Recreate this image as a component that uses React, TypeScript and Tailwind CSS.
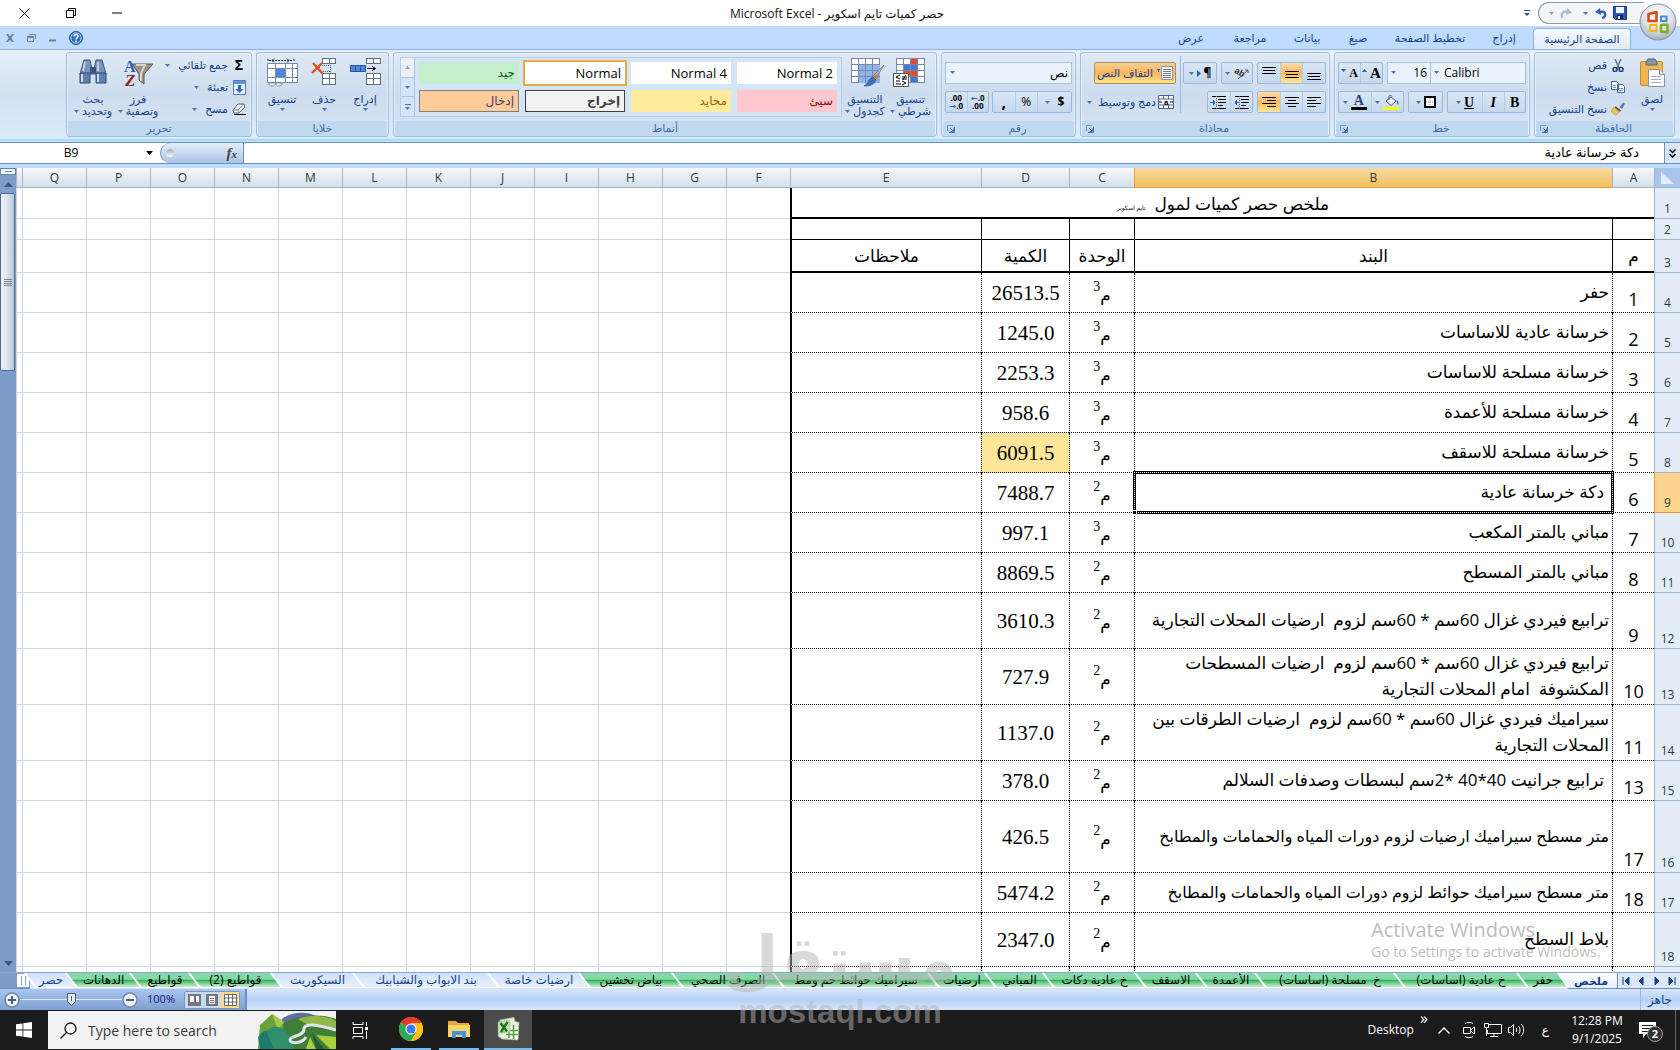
import React from 'react';

const UI = "font-['Open_Sans','DejaVu_Sans',sans-serif]";

/* ---------- small shared pieces ---------- */

function Arrow({ dim = false }: { dim?: boolean }) {
  return (
    <svg width="5" height="3" viewBox="0 0 5 3" className="shrink-0" aria-hidden="true">
      <path d="M0 0h5L2.5 3z" fill={dim ? '#9aa3ad' : '#4a76ad'} />
    </svg>
  );
}

function Launcher() {
  return (
    <button aria-label="خيارات" className="absolute left-1 top-1">
      <svg width="8" height="8" viewBox="0 0 8 8">
        <path d="M.5 6V.5H6" fill="none" stroke="#6f90b8" />
        <path d="M7.5 2v5.5H2M3 3l3 3M6.500 3.500V6.500H3.500" fill="none" stroke="#4d74a8" />
      </svg>
    </button>
  );
}

function Group({ title, className, launcher, children }: { title: string; className: string; launcher?: boolean; children: React.ReactNode }) {
  return (
    <section
      className={
        'flex h-[85px] shrink-0 flex-col overflow-hidden rounded-[3px] border border-[#a3bfdf] bg-gradient-to-b from-[#dfe9f5] via-[#cddcee] to-[#d7e5f5] shadow-[inset_0_0_0_1px_#e6effa] ' +
        className
      }
    >
      <div className="flex-1 px-[3px] pt-[3px]">{children}</div>
      <div className={'relative mx-px h-[15px] bg-[#c1d8f1] text-center text-[11px] leading-[14px] text-[#3e6aaa]' + (launcher ? ' pl-[18px]' : '')}>
        {title}
        {launcher && <Launcher />}
      </div>
    </section>
  );
}

function Big({ icon, lines, className, arrow = 'below' }: { icon: React.ReactNode; lines: string[]; className: string; arrow?: 'below' | 'inline' }) {
  return (
    <button className={'flex h-[64px] shrink-0 flex-col items-center text-[11px] leading-[12px] text-[#15428b] ' + className}>
      <span className="mb-[5px] mt-[2px] block h-[30px]">{icon}</span>
      {lines.map((l, i) => (
        <span key={l} className="flex items-center gap-[3px] whitespace-nowrap">
          {l}
          {arrow === 'inline' && i === lines.length - 1 && <Arrow />}
        </span>
      ))}
      {arrow === 'below' && (
        <span className="mt-[3px]">
          <Arrow />
        </span>
      )}
    </button>
  );
}

function Small({ icon, label, arrow }: { icon: React.ReactNode; label: string; arrow?: boolean }) {
  return (
    <button className="flex h-[22px] items-center gap-1 whitespace-nowrap text-[11px] leading-[18px] text-[#15428b]">
      <span className="flex w-[14px] justify-center">{icon}</span>
      {label}
      {arrow && (
        <span className="mr-1">
          <Arrow />
        </span>
      )}
    </button>
  );
}

function Bar({ className = '', children }: { className?: string; children: React.ReactNode }) {
  return (
    <div className={'flex h-[22px] items-stretch divide-x divide-[#b4cbe6] rounded-[2px] border border-[#9ab8dc] bg-gradient-to-b from-[#d9e6f4] to-[#c5d8ee] ' + className}>
      {children}
    </div>
  );
}

function Tool({ label, on, className = 'flex-1', children }: { label: string; on?: boolean; className?: string; children: React.ReactNode }) {
  return (
    <button
      aria-label={label}
      className={'flex items-center justify-center gap-[3px] ' + className + (on ? ' bg-gradient-to-b from-[#fbdcac] via-[#fdb863] to-[#fde696]' : '')}
    >
      {children}
    </button>
  );
}

function Lines({ rows }: { rows: [number, number, number][] }) {
  return (
    <svg width="14" height="13" viewBox="0 0 14 13" shapeRendering="crispEdges">
      {rows.map(([x, y, w], i) => (
        <rect key={i} x={x} y={y} width={w} height="1" fill="#000" />
      ))}
    </svg>
  );
}

/* ---------- title bar and ribbon tabs ---------- */

function OfficeOrb() {
  return (
    <button aria-label="زر Office" className="absolute right-[3px] top-[3px] z-10">
      <svg width="38" height="38" viewBox="0 0 38 38">
        <defs>
          <radialGradient id="orb" cx="50%" cy="30%" r="70%">
            <stop offset="0" stopColor="#fff" />
            <stop offset=".6" stopColor="#dde1e8" />
            <stop offset="1" stopColor="#a5adbb" />
          </radialGradient>
        </defs>
        <circle cx="19" cy="19" r="18" fill="url(#orb)" stroke="#8a919d" />
        <path d="M9.500 11l8-2v9h-8z" fill="none" stroke="#dd4b13" strokeWidth="2.600" strokeLinejoin="round" />
        <path d="M22 13.500h5.500v4.500H22z" fill="none" stroke="#3f8ad8" strokeWidth="2" strokeLinejoin="round" />
        <path d="M11 22h6.500v6H11z" fill="none" stroke="#f3b51c" strokeWidth="2" strokeLinejoin="round" />
        <path d="M22 22l6.500-.5v8L22 28.500z" fill="none" stroke="#7cb51f" strokeWidth="2.600" strokeLinejoin="round" />
      </svg>
    </button>
  );
}

function TitleBar() {
  return (
    <header dir="ltr" className="flex h-[26px] items-center bg-white">
      <div className="flex flex-1 items-center">
        <button aria-label="إغلاق" className="flex w-[48px] justify-center">
          <svg width="11" height="11" viewBox="0 0 11 11"><path d="M.5.5l10 10M10.500.5l-10 10" stroke="#000" fill="none" /></svg>
        </button>
        <button aria-label="استعادة" className="flex w-[46px] justify-center">
          <svg width="10" height="10" viewBox="0 0 10 10"><path d="M2.500 2.500V.5h7v7h-2M.5 2.500h7v7h-7z" stroke="#000" fill="none" /></svg>
        </button>
        <button aria-label="تصغير" className="flex w-[46px] justify-center">
          <svg width="10" height="2" viewBox="0 0 10 2"><path d="M0 1h10" stroke="#000" /></svg>
        </button>
      </div>
      <h1 dir="rtl" className="pl-[30px] pt-px text-[12px] text-[#111]">
        حصر كميات تايم اسكوير - <bdi>Microsoft Excel</bdi>
      </h1>
      <div className="flex flex-1 items-center justify-end gap-2 pr-[36px]">
        <button aria-label="تخصيص شريط الأدوات">
          <svg width="6" height="7" viewBox="0 0 6 7"><path d="M0 .5h6" stroke="#2c4f84" /><path d="M0 3h6L3 6z" fill="#2c4f84" /></svg>
        </button>
        <div className="flex h-[22px] w-[106px] items-center gap-[6px] rounded-l-full border border-r-0 border-[#8e99ab] bg-[#f3f5f8] pl-[10px]">
          <Arrow dim />
          <svg width="13" height="12" viewBox="0 0 13 12"><path d="M2.500 11C.5 7 3 3.500 7.500 5" fill="none" stroke="#a9bcd4" strokeWidth="2.500" /><path d="M7 1l5 4.500L6 8z" fill="#a9bcd4" /></svg>
          <span className="ml-1"><Arrow /></span>
          <svg width="13" height="12" viewBox="0 0 13 12"><path d="M8 11c5-1 4-8-2-6" fill="none" stroke="#2c5fb8" strokeWidth="2.500" /><path d="M6 1L1 5l6 3z" fill="#2c5fb8" /></svg>
          <svg width="14" height="14" viewBox="0 0 14 14"><path d="M.5.5h13v13h-11l-2-2z" fill="#2d57b5" stroke="#1b3880" /><path d="M3 1h8v6H3z" fill="#eef3fb" /><path d="M4 9h6v4H4z" fill="#16274f" /><path d="M5 10h2v3H5z" fill="#fff" /></svg>
        </div>
      </div>
    </header>
  );
}

const ribbonTabs: [string, string][] = [
  ['إدراج', 'w-[58px]'],
  ['تخطيط الصفحة', 'w-[90px]'],
  ['صيغ', 'w-[54px]'],
  ['بيانات', 'w-[48px]'],
  ['مراجعة', 'w-[66px]'],
  ['عرض', 'w-[52px]'],
];

function TabRow() {
  return (
    <nav className="flex h-[23px] items-end bg-[#bfdbff] pr-[49px] text-[11px] text-[#15428b]">
      <button className="h-[21px] w-[98px] whitespace-nowrap rounded-t-[4px] border border-b-0 border-[#8db2e3] bg-gradient-to-b from-[#f5f9fe] to-[#e0ebf9]">الصفحة الرئيسية</button>
      {ribbonTabs.map(([t, w]) => (
        <button key={t} className={'h-[21px] whitespace-nowrap ' + w}>{t}</button>
      ))}
      <div className="mr-auto flex h-full items-center gap-[13px] pl-[6px]">
        <button aria-label="تعليمات">
          <svg width="14" height="14" viewBox="0 0 14 14"><circle cx="7" cy="7" r="6.500" fill="#2f6fc8" stroke="#1d4f9c" /><circle cx="7" cy="7" r="5.200" fill="none" stroke="#b9d6f7" /><path d="M5 5.500c0-2.600 4-2.400 4 0C9 7 7 6.800 7 8.500M7 9.500V11" fill="none" stroke="#fff" strokeWidth="1.500" /></svg>
        </button>
        <button aria-label="تصغير المصنف">
          <svg width="7" height="9" viewBox="0 0 7 9"><path d="M0 7.500h7" stroke="#6b7c93" strokeWidth="2" /></svg>
        </button>
        <button aria-label="استعادة المصنف">
          <svg width="9" height="8" viewBox="0 0 9 8"><path d="M2 .5h6.500V5M.5 2.500h6v5h-6z" fill="none" stroke="#6b7c93" /><path d="M0 3h7" stroke="#6b7c93" strokeWidth="2" /></svg>
        </button>
        <button aria-label="إغلاق المصنف">
          <svg width="8" height="8" viewBox="0 0 8 8"><path d="M1 0l6 8M7 0L1 8" stroke="#6b7c93" strokeWidth="2" /></svg>
        </button>
      </div>
    </nav>
  );
}

/* ---------- ribbon icons ---------- */

const PasteIcon = () => (
  <svg width="27" height="30" viewBox="0 0 27 30">
    <rect x="1.500" y="3.500" width="22" height="24" rx="1.500" fill="#f0b653" stroke="#c98a2c" />
    <path d="M7 4l2-3h7l2 3v3H7z" fill="#8b94a1" stroke="#5c6470" />
    <path d="M9.500 11.500h11l5 5v12h-16z" fill="#fff" stroke="#8793a5" />
    <path d="M20.500 11.500v5h5" fill="#dbe4ef" stroke="#8793a5" />
    <path d="M12 18.500h10M12 21.500h10M12 24.500h10" stroke="#9fb4d1" />
  </svg>
);
const CutIcon = () => (
  <svg width="12" height="13" viewBox="0 0 12 13"><path d="M3 0l4 9M9 0L5 9" stroke="#6b7688" strokeWidth="1.500" /><circle cx="3" cy="10.500" r="2" fill="none" stroke="#1f3b75" strokeWidth="1.500" /><circle cx="9" cy="10.500" r="2" fill="none" stroke="#1f3b75" strokeWidth="1.500" /></svg>
);
const CopyIcon = () => (
  <svg width="14" height="12" viewBox="0 0 14 12"><path d="M.5.5h5l2 2v6h-7zM6.500 3.500h5l2 2v6h-7z" fill="#fff" stroke="#3d64a8" /><path d="M2 4.500h3M2 6.500h3M8 7.500h4M8 9.500h4" stroke="#6b93d0" /></svg>
);
const PainterIcon = () => (
  <svg width="15" height="14" viewBox="0 0 15 14"><path d="M9 5l4-5 2 1-3 6z" fill="#5e78a5" /><path d="M5 4l6 5-2 1-5-5z" fill="#4a4a4a" /><path d="M3 5l6 5-4 4-5-5z" fill="#f2c14e" stroke="#b98a2a" strokeWidth=".7" /></svg>
);
const BorderIcon = () => (
  <svg width="12" height="12" viewBox="0 0 12 12"><rect x="1" y="1" width="10" height="10" fill="#fff" stroke="#000" strokeWidth="2" /><path d="M6 2v8M2 6h8" stroke="#888" strokeDasharray="1 1" /></svg>
);
const FillIcon = () => (
  <svg width="17" height="15" viewBox="0 0 17 15"><path d="M3 6l5-4 5 4-5 4.500z" fill="#e9eef5" stroke="#4b5f80" /><path d="M6 5V1.500c0-1.500 3-1.500 3 0" fill="none" stroke="#4b5f80" /><path d="M13 5c3 1 3 4 2 5-1-1-1-3-2-5z" fill="#3773c9" /><rect y="12" width="16" height="3" fill="#ff0" /></svg>
);
const OrientIcon = () => (
  <svg width="16" height="14" viewBox="0 0 16 14" className="[direction:ltr]"><text x="1" y="9" fontSize="9" fontWeight="bold" fontFamily="Liberation Sans" fill="#333" transform="rotate(30 6 7)">ab</text><path d="M5 13L15 4M15 7V4h-3" stroke="#555" fill="none" /></svg>
);
const IndentIcon = ({ flip = false }: { flip?: boolean }) => (
  <svg width="17" height="13" viewBox="0 0 17 13" shapeRendering="crispEdges">
    <path d="M2 .5h4M7 .5h9M8 3.500h8M8 6.500h8M8 9.500h5M2 12.500h4M7 12.500h9" stroke="#000" />
    <path d="M6.500 0v13" stroke="#666" strokeDasharray="1 1" />
    <path d={flip ? 'M6 6.500H2M2 6.500l2-2M2 6.500l2 2' : 'M0 6.500h5M5 6.500l-2-2M5 6.500l-2 2'} stroke="#2d62b5" strokeWidth="1.500" />
  </svg>
);
const WrapIcon = () => (
  <svg width="16" height="14" viewBox="0 0 16 14" className="shrink-0"><path d="M4.500.5h11v13h-11z" fill="#fff" stroke="#7c91b3" /><path d="M6 3.500h8M6 5.500h8M6 7.500h8M6 9.500h8M6 11.500h8" stroke="#6d7b90" /><path d="M3 3.500H0M1.500 3v3" stroke="#2c5fb8" fill="none" /></svg>
);
const MergeIcon = () => (
  <svg width="16" height="14" viewBox="0 0 16 14" className="shrink-0 [direction:ltr]"><path d="M.5.5h15v13H.5zM.5 4h15M.5 10h15M5.500.5V4M10.500.5V4M5.500 10v3.500M10.500 10v3.500" fill="#fff" stroke="#55657d" /><text x="6" y="9.500" fontSize="8" fontWeight="bold" fontFamily="Liberation Sans">a</text><path d="M1 7h3M12 7h3" stroke="#2c5fb8" strokeWidth="1.500" /></svg>
);
const Grid30 = ({ children }: { children?: React.ReactNode }) => (
  <svg width="31" height="29" viewBox="0 0 31 29">
    <rect x="1.500" y=".5" width="28" height="24" fill="#fff" stroke="#7689a8" />
    {children}
    <path d="M8.500 1v24M15.500 1v24M22.500 1v24M1 6.500h29M1 12.500h29M1 18.500h29" stroke="#7689a8" />
  </svg>
);
const CondIcon = () => (
  <div className="relative">
    <Grid30><path d="M16 1h6v5h-6zM9 13h13v5H9z" fill="#ea4a28" /><path d="M9 7h13v6H9zM16 19h6v5h-6z" fill="#3f78d6" /></Grid30>
    <svg className="absolute -left-[2px] bottom-0" width="16" height="14" viewBox="0 0 16 14"><path d="M.5.5h15v13H.5z" fill="#fff" stroke="#555" /><path d="M7 2L3 4l4 2M3 8h4M9 4h5M9 6h5M13 2l-3 5M9 8l4 2-4 2M3 11h5" stroke="#000" fill="none" /></svg>
  </div>
);
const TableFmtIcon = () => (
  <div className="relative">
    <Grid30><path d="M9 7h21v18H9z" fill="#8fb4ea" /></Grid30>
    <svg className="absolute -right-1 bottom-0" width="22" height="22" viewBox="0 0 22 22"><path d="M21 0l-8 13-3-2z" fill="#b9bdc4" stroke="#72787f" strokeWidth=".8" /><path d="M14 9l2 2-3 4-3-3z" fill="#c97b3a" /><path d="M10 12l3 3c-2 5-6 6-12 6 4-2 4-7 9-9z" fill="#3e73b8" stroke="#23518f" strokeWidth=".6" /></svg>
  </div>
);
const InsertIcon = () => (
  <svg width="31" height="28" viewBox="0 0 31 28" shapeRendering="crispEdges"><path d="M16.500.5h14v5h-14zM23.500.5v5M16.500 15.500h14v11h-14zM23.500 15.500v11M16.500 20.500h14" fill="#fff" stroke="#5e6f88" /><path d="M.5 7.500h15v6H.5zM5.500 7.500v6M10.500 7.500v6" fill="#4d86dc" stroke="#2a58a0" /><path d="M17 10.500h8M22 8l3 2.500-3 2.500" fill="none" stroke="#222" /></svg>
);
const DeleteIcon = () => (
  <svg width="27" height="28" viewBox="0 0 27 28"><g shapeRendering="crispEdges"><path d="M11.500.5h13v5h-13zM18.500.5v5M11.500 15.500h13v11h-13zM18.500 15.500v11M11.500 20.500h13" fill="#fff" stroke="#5e6f88" /><path d="M8.500 7.500h11v6h-11z" fill="none" stroke="#2f66c0" strokeDasharray="1 1" /></g><path d="M2 5l10 11M11 5L1 15" stroke="#e8501e" strokeWidth="2.400" /></svg>
);
const FormatIcon = () => (
  <svg width="31" height="29" viewBox="0 0 31 29"><path d="M1 1v3M27 1v3M2 2.500h24M8 2.500h11" stroke="#333" strokeDasharray="2 1" /><path d="M7 .5l-2 2 2 2M20 .5l2 2-2 2" fill="none" stroke="#333" /><path d="M.5 5.500h30v19H.5z" fill="#fff" stroke="#7689a8" /><path d="M9 11h9v9H9z" fill="#4d86dc" /><path d="M8.500 5v20M18.500 5v20M25.500 5v20M.5 10.500h30M.5 19.500h30" stroke="#7689a8" /><path d="M2 25h6c2 4-7 4-6 0zM9 25h6c1 4-7 4-6 0z" fill="#fff" stroke="#7689a8" /></svg>
);
const SortIcon = () => (
  <svg width="31" height="30" viewBox="0 0 31 30" className="overflow-visible [direction:ltr]"><path d="M9 6h21L21 16v10l-5-4v-6z" fill="#9a9187" stroke="#5f5953" /><path d="M13 7h9l-4 8v8" fill="none" stroke="#d9d3cb" strokeWidth="2" /><text x="1" y="14" fontSize="16" fontWeight="bold" fontFamily="Liberation Serif" fill="#2f62b8">A</text><text x="2" y="28" fontSize="17" fontWeight="bold" fontFamily="Liberation Serif" fontStyle="italic" fill="#8c2717">Z</text></svg>
);
const FindIcon = () => (
  <svg width="28" height="27" viewBox="0 0 28 27"><path d="M5 2h6l3 14H1zM17 2h6l4 14H14z" fill="#7d95bb" stroke="#3b527d" /><path d="M1 15h10v10H1zM17 15h10v10H17z" fill="#5f7fb3" stroke="#2e4673" /><path d="M3 16v8M19 16v8" stroke="#cfdcf0" strokeWidth="2" /><path d="M6 4l-2 9M19 4v9" stroke="#d7e1f0" strokeWidth="1.500" /><path d="M11 9h6v6h-6z" fill="#3b527d" /></svg>
);
const DownIcon = () => (
  <svg width="13" height="15" viewBox="0 0 13 15"><path d="M.5.5h12v14H.5z" fill="#e8f0fb" stroke="#5a7fb8" /><path d="M1 1h11v3H1z" fill="#5f93dc" /><path d="M5 5h3v4h2.500l-4 4-4-4H5z" fill="#2d6bd0" /></svg>
);
const EraserIcon = () => (
  <svg width="14" height="12" viewBox="0 0 14 12"><path d="M6 1h6l1 3-6 6H2L1 7z" fill="#f6f6f8" stroke="#555c68" /><path d="M1 7h5l1 3M6 7l6-6" fill="none" stroke="#7b8290" /><path d="M2 11.500h12" stroke="#000" /></svg>
);

/* ---------- ribbon ---------- */

const combo = 'block h-[22px] appearance-none border border-[#abc1de] bg-[#eaf2fb] text-[12px] leading-[18px] text-black outline-none';

function Ribbon() {
  return (
    <div className="flex h-[91px] gap-1 border-y border-[#8db2e3] border-b-[#8fe0ee] bg-gradient-to-b from-[#e7effa] via-[#d3e1f3] to-[#dcebfa] pr-[5px] pt-[2px]">
      <Group title="الحافظة" className="w-[141px]" launcher>
        <div className="flex gap-2">
          <Big className="w-[38px]" icon={<PasteIcon />} lines={['لصق']} />
          <div className="-mt-[2px]">
            <Small icon={<CutIcon />} label="قص" />
            <Small icon={<CopyIcon />} label="نسخ" />
            <Small icon={<PainterIcon />} label="نسخ التنسيق" />
          </div>
        </div>
      </Group>

      <Group title="خط" className="w-[196px]" launcher>
        <div className="flex flex-col gap-[7px] pt-[6px]">
          <div className="flex gap-1">
            <div className="flex">
              <div dir="ltr" className="relative">
                <select aria-label="خط" className={combo + ' w-[96px] pl-[13px]'}><option>Calibri</option></select>
                <span className="pointer-events-none absolute left-1 top-[9px] flex"><Arrow /></span>
              </div>
              <div className="relative">
                <select aria-label="حجم الخط" className={combo + ' w-[43px] border-r-0 pr-[3px]'}><option>16</option></select>
                <span className="pointer-events-none absolute left-1 top-[9px] flex"><Arrow /></span>
              </div>
            </div>
            <Bar className="w-[45px] font-['Liberation_Serif',serif] font-bold">
              <Tool label="تكبير الخط"><span className="text-[15px]">A</span><svg width="5" height="9"><path d="M0 3h5L2.500 0z" fill="#2c5fb8" /></svg></Tool>
              <Tool label="تصغير الخط"><span className="text-[12px]">A</span><svg width="5" height="9"><path d="M0 0h5L2.500 3z" fill="#2c5fb8" /></svg></Tool>
            </Bar>
          </div>
          <div className="flex gap-1 font-['Liberation_Serif',serif] text-[14px] font-bold">
            <Bar className="w-[79px]">
              <Tool label="غامق">B</Tool>
              <Tool label="مائل"><i>I</i></Tool>
              <Tool label="تسطير" className="w-[34px]"><u>U</u><Arrow /></Tool>
            </Bar>
            <Bar className="w-[35px]"><Tool label="حدود"><BorderIcon /><Arrow /></Tool></Bar>
            <Bar className="w-[66px]">
              <Tool label="لون التعبئة"><FillIcon /><Arrow /></Tool>
              <Tool label="لون الخط"><span className="h-[16px] w-[16px] border-b-[3px] border-black text-center leading-[13px] text-[#26457c]">A</span><Arrow /></Tool>
            </Bar>
          </div>
        </div>
      </Group>

      <Group title="محاذاة" className="w-[250px]" launcher>
        <div className="flex">
          <div className="flex w-[146px] shrink-0 flex-col gap-[7px] border-l border-[#9ab8dc] pt-[6px]">
            <div className="flex gap-1">
              <Bar className="w-[69px]">
                <Tool label="محاذاة للأسفل"><Lines rows={[[0, 6, 14], [1, 9, 12], [0, 12, 14]]} /></Tool>
                <Tool label="محاذاة للوسط" on><Lines rows={[[0, 4, 14], [1, 7, 12], [0, 10, 14]]} /></Tool>
                <Tool label="محاذاة للأعلى"><Lines rows={[[0, 0, 14], [1, 3, 12], [0, 6, 14]]} /></Tool>
              </Bar>
              <Bar className="w-[32px]"><Tool label="الاتجاه"><OrientIcon /><Arrow /></Tool></Bar>
              <Bar className="w-[34px]"><Tool label="اتجاه النص"><span className="text-[12px] font-bold">¶</span><svg width="4" height="7"><path d="M0 0l4 3.500L0 7z" fill="#2c5fb8" /></svg><Arrow /></Tool></Bar>
            </div>
            <div className="flex gap-1">
              <Bar className="w-[69px]">
                <Tool label="محاذاة لليسار"><Lines rows={[[0, 1, 14], [0, 4, 9], [0, 7, 14], [0, 10, 9]]} /></Tool>
                <Tool label="توسيط"><Lines rows={[[0, 1, 14], [3, 4, 8], [0, 7, 14], [3, 10, 8]]} /></Tool>
                <Tool label="محاذاة لليمين" on><Lines rows={[[0, 1, 14], [5, 4, 9], [0, 7, 14], [5, 10, 9]]} /></Tool>
              </Bar>
              <Bar className="w-[46px]">
                <Tool label="إنقاص المسافة"><IndentIcon flip /></Tool>
                <Tool label="زيادة المسافة"><IndentIcon /></Tool>
              </Bar>
            </div>
          </div>
          <div className="flex flex-col gap-[7px] pr-1 pt-[6px] text-[11px] leading-[16px] text-[#15428b]">
            <button className="flex h-[22px] w-[82px] items-center gap-1 whitespace-nowrap rounded-[2px] border border-[#a8905c] bg-gradient-to-b from-[#f7cf94] via-[#fbb45c] to-[#fde58e] px-[2px]"><WrapIcon />التفاف النص</button>
            <button className="flex h-[22px] items-center gap-[2px] whitespace-nowrap px-[2px]"><MergeIcon />دمج وتوسيط<span className="mr-1"><Arrow /></span></button>
          </div>
        </div>
      </Group>

      <Group title="رقم" className="w-[135px]" launcher>
        <div className="flex flex-col gap-[7px] pt-[6px]">
          <div className="relative">
            <select aria-label="تنسيق الأرقام" className={combo + ' w-full pr-[3px]'}><option>نص</option></select>
            <span className="pointer-events-none absolute left-[5px] top-[9px] flex"><Arrow /></span>
          </div>
          <div className="flex justify-between text-[12px]">
            <Bar className="w-[80px]">
              <Tool label="عملة" className="w-[34px] gap-[8px]"><b>$</b><Arrow /></Tool>
              <Tool label="نسبة مئوية">%</Tool>
              <Tool label="فاصلة"><b className="text-[16px] leading-[10px]">,</b></Tool>
            </Bar>
            <Bar className="w-[44px] text-[8px] font-bold leading-[8px]">
              <Tool label="زيادة المنازل العشرية"><span dir="ltr"><span className="text-[#2c5fb8]">←</span>.0<br />.00</span></Tool>
              <Tool label="إنقاص المنازل العشرية"><span dir="ltr">.00<br /><span className="text-[#2c5fb8]">→</span>.0</span></Tool>
            </Bar>
          </div>
        </div>
      </Group>

      <Group title="أنماط" className="w-[544px]">
        <div className="flex">
          <Big className="w-[45px]" icon={<CondIcon />} lines={['تنسيق', 'شرطي']} arrow="inline" />
          <Big className="w-[46px]" icon={<TableFmtIcon />} lines={['التنسيق', 'كجدول']} arrow="inline" />
          <div className="ml-[3px] mt-px flex h-[60px] flex-1 border border-[#b6cdea] bg-[#d5e5f8]">
            <div className="grid flex-1 grid-cols-4 content-start gap-x-[6px] gap-y-[6px] px-[4px] pt-[4px] text-[13px] [&>button]:h-[22px] [&>button]:px-[4px] [&>button]:text-right [&>button]:leading-[18px]">
              <button className="bg-white"><bdi>Normal 2</bdi></button>
              <button className="bg-white"><bdi>Normal 4</bdi></button>
              <button className="bg-white outline-2 outline-[#e9ab3d]">Normal</button>
              <button className="bg-[#c6efce] text-[12px] text-[#006100]">جيد</button>
              <button className="bg-[#ffc7ce] text-[12px] text-[#9c0006]">سيئ</button>
              <button className="bg-[#ffeb9c] text-[12px] text-[#9c6500]">محايد</button>
              <button className="border border-[#3f3f3f] bg-[#f2f2f2] text-[12px] font-bold text-[#3f3f3f]">إخراج</button>
              <button className="border border-[#7f7f7f] bg-[#ffcc99] text-[12px] text-[#3f3f76]">إدخال</button>
            </div>
            <div className="flex w-[14px] flex-col divide-y divide-[#aac4e4] border-r border-[#aac4e4]">
              <button aria-label="السابق" className="flex flex-1 items-center justify-center bg-[#eceff3]"><span className="rotate-180"><Arrow dim /></span></button>
              <button aria-label="التالي" className="flex flex-1 items-center justify-center"><Arrow /></button>
              <button aria-label="المزيد" className="flex flex-1 flex-col items-center justify-center gap-[2px]"><span className="h-px w-[6px] bg-[#4a76ad]" /><Arrow /></button>
            </div>
          </div>
        </div>
      </Group>

      <Group title="خلايا" className="w-[133px]">
        <div className="flex">
          <Big className="w-[40px]" icon={<InsertIcon />} lines={['إدراج']} />
          <Big className="w-[42px]" icon={<DeleteIcon />} lines={['حذف']} />
          <Big className="w-[42px]" icon={<FormatIcon />} lines={['تنسيق']} />
        </div>
      </Group>

      <Group title="تحرير" className="w-[186px]">
        <div className="flex">
          <div className="-mt-[2px] w-[88px] shrink-0 pr-[2px]">
            <Small icon={<span className="text-[14px] font-bold text-black">Σ</span>} label="جمع تلقائي" arrow />
            <Small icon={<DownIcon />} label="تعبئة" arrow />
            <Small icon={<EraserIcon />} label="مسح" arrow />
          </div>
          <Big className="w-[44px]" icon={<SortIcon />} lines={['فرز', 'وتصفية']} arrow="inline" />
          <Big className="w-[46px]" icon={<FindIcon />} lines={['بحث', 'وتحديد']} arrow="inline" />
        </div>
      </Group>
    </div>
  );
}

/* ---------- formula bar ---------- */

function FormulaBar() {
  return (
    <div dir="ltr" className="mt-[2px] flex h-[22px] border-y border-[#6a8fbf] bg-white">
      <div className="flex w-[160px] items-center pr-[7px]">
        <input aria-label="مربع الاسم" defaultValue="B9" className="w-full min-w-0 flex-1 pr-[4px] text-center text-[12px] outline-none" />
        <svg width="7" height="4"><path d="M0 0h7L3.500 4z" fill="#000" /></svg>
      </div>
      <div className="flex w-[84px] items-center justify-between rounded-l-full border border-y-0 border-[#6a8fbf] bg-gradient-to-b from-[#e3edf9] via-[#c8daf2] to-[#a9c3e5] pl-[5px] pr-[6px]">
        <span className="h-[8px] w-[8px] rounded-full bg-gradient-to-b from-[#a4abb5] to-white" />
        <button aria-label="إدراج دالة" className="font-['Liberation_Serif',serif] text-[15px] font-bold italic leading-none text-[#444]">f<span className="text-[11px]">x</span></button>
      </div>
      <input dir="rtl" aria-label="شريط الصيغة" defaultValue="دكة خرسانة عادية" className="min-w-0 flex-1 pr-[25px] text-[13px] outline-none" />
      <button aria-label="توسيع شريط الصيغة" className="flex w-[16px] items-center justify-center border-l border-[#6a8fbf] bg-[#dbe7f6]">
        <svg width="7" height="9" viewBox="0 0 7 9"><path d="M.5.5l3 3 3-3M.5 5l3 3 3-3" fill="none" stroke="#000" strokeWidth="1.500" /></svg>
      </button>
    </div>
  );
}

/* ---------- worksheet ---------- */

type Row = { r: number; n: string; item: string; unit: string; qty: string; h: string; pad?: boolean; long?: boolean };
const rows: Row[] = [
  { r: 4, n: '1', item: 'حفر', unit: '3', qty: '26513.5', h: 'h-[40px]' },
  { r: 5, n: '2', item: 'خرسانة عادية للاساسات', unit: '3', qty: '1245.0', h: 'h-[40px]' },
  { r: 6, n: '3', item: 'خرسانة مسلحة للاساسات', unit: '3', qty: '2253.3', h: 'h-[40px]' },
  { r: 7, n: '4', item: 'خرسانة مسلحة للأعمدة', unit: '3', qty: '958.6', h: 'h-[40px]' },
  { r: 8, n: '5', item: 'خرسانة مسلحة للاسقف', unit: '3', qty: '6091.5', h: 'h-[40px]' },
  { r: 9, n: '6', item: 'دكة خرسانة عادية', unit: '2', qty: '7488.7', h: 'h-[40px]', pad: true },
  { r: 10, n: '7', item: 'مباني بالمتر المكعب', unit: '3', qty: '997.1', h: 'h-[40px]' },
  { r: 11, n: '8', item: 'مباني بالمتر المسطح', unit: '2', qty: '8869.5', h: 'h-[40px]' },
  { r: 12, n: '9', item: 'ترابيع فيردي غزال 60سم * 60سم لزوم  ارضيات المحلات التجارية', unit: '2', qty: '3610.3', h: 'h-[56px]' },
  { r: 13, n: '10', item: 'ترابيع فيردي غزال 60سم * 60سم لزوم  ارضيات المسطحات\nالمكشوفة  امام المحلات التجارية', unit: '2', qty: '727.9', h: 'h-[56px]' },
  { r: 14, n: '11', item: 'سيراميك فيردي غزال 60سم * 60سم لزوم  ارضيات الطرقات بين\nالمحلات التجارية', unit: '2', qty: '1137.0', h: 'h-[56px]' },
  { r: 15, n: '13', item: 'ترابيع جرانيت 40*40 *2سم لبسطات وصدفات السلالم', unit: '2', qty: '378.0', h: 'h-[40px]', pad: true },
  { r: 16, n: '17', item: 'متر مسطح سيراميك ارضيات لزوم دورات المياه والحمامات والمطابخ', unit: '2', qty: '426.5', h: 'h-[72px]', long: true },
  { r: 17, n: '18', item: 'متر مسطح سيراميك حوائط لزوم دورات المياه والحمامات والمطابخ', unit: '2', qty: '5474.2', h: 'h-[40px]', long: true },
  { r: 18, n: '', item: 'بلاط السطح', unit: '2', qty: '2347.0', h: 'h-[54px]' },
  { r: 19, n: '', item: '', unit: '', qty: '', h: 'h-[40px]' },
];
const freeCols = ['F', 'G', 'H', 'I', 'J', 'K', 'L', 'M', 'N', 'O', 'P', 'Q', ''];

const colHead = 'border-b border-l border-[#9eb6ce] bg-gradient-to-b from-[#f7f9fb] to-[#d5dee9] p-0 font-normal';
const rowHead = 'border-b border-l border-[#9eb6ce] bg-[#e4ecf7] p-0 align-bottom font-normal';
const dot = 'border-b border-l border-dotted border-black p-0 ';
const solid = 'border-l border-black p-0 font-normal ';

function FreeCells() {
  return (
    <>
      {freeCols.map((c, i) => (
        <td key={i} className="border-b border-l border-[#d0d7e5] p-0" />
      ))}
    </>
  );
}

function Sheet() {
  return (
    <div className="min-w-0 flex-1 overflow-hidden bg-white">
      <table dir="rtl" className="w-full table-fixed border-separate border-spacing-0 text-black">
        <colgroup>
          <col className="w-[26px]" />
          <col className="w-[42px]" />
          <col className="w-[478px]" />
          <col className="w-[65px]" />
          <col className="w-[88px]" />
          <col className="w-[191px]" />
          {freeCols.map((c, i) => (
            <col key={i} className={c ? 'w-[64px]' : ''} />
          ))}
        </colgroup>
        <thead>
          <tr className="h-[20px] text-[12px] leading-[19px] text-[#27413e]">
            <th className="border-b border-l border-[#9eb6ce] bg-[#a9c4e9] p-0">
              <svg className="mr-[6px] block" width="13" height="12"><path d="M0 0l13 12H0z" fill="#e4ecf7" /></svg>
            </th>
            <th className={colHead}>A</th>
            <th className="border-b border-l border-[#f29536] bg-gradient-to-b from-[#f9d99f] to-[#f1c15f] p-0 font-normal">B</th>
            {['C', 'D', 'E', ...freeCols].map((c, i) => (
              <th key={i} className={colHead}>{c}</th>
            ))}
          </tr>
        </thead>
        <tbody className="text-[12px] text-[#27413e]">
          <tr className="h-[31px]">
            <th className={rowHead}>1</th>
            <td colSpan={5} className="whitespace-pre border-b-2 border-l-2 border-black p-0 pt-[3px] text-center text-[17px] leading-[20px] text-black">
              ملخص حصر كميات لمول  <span className="text-[6px] leading-none">تايم اسكوير</span>
            </td>
            <FreeCells />
          </tr>
          <tr className="h-[21px]">
            <th className={rowHead}>2</th>
            {[0, 1, 2, 3].map((i) => (
              <td key={i} className={solid + 'border-b'} />
            ))}
            <td className="border-b border-l-2 border-black p-0" />
            <FreeCells />
          </tr>
          <tr className="h-[33px] text-[12px]">
            <th className={rowHead}>3</th>
            {['م', 'البند', 'الوحدة', 'الكمية'].map((t) => (
              <th key={t} scope="col" className={solid + 'border-b-2 text-[17px] leading-[24px] text-black'}>{t}</th>
            ))}
            <th scope="col" className="border-b-2 border-l-2 border-black p-0 text-[17px] font-normal leading-[24px] text-black">ملاحظات</th>
            <FreeCells />
          </tr>
          {rows.map((row) => (
            <tr key={row.r} className={row.h}>
              <th className={row.r === 9 ? 'border-b border-l border-[#f29536] bg-[#ffd58d] p-0 align-bottom font-normal' : rowHead}>{row.r === 19 ? '' : row.r}</th>
              <td className={dot + 'text-center align-bottom text-[18px] leading-[25px] text-black'}>{row.n}</td>
              <td className={dot + 'relative whitespace-pre pb-[2px] leading-[26px] text-black ' + (row.long ? 'text-[16px] ' : 'text-[17px] ') + (row.pad ? 'pr-[8px]' : 'pr-[3px]')}>
                {row.item}
                {row.r === 9 && (
                  <span className="pointer-events-none absolute -inset-[2px] z-10 border-[3px] border-black">
                    <span className="absolute -inset-[2px] border border-dotted border-white" />
                    <span className="absolute -bottom-[4px] -left-[4px] h-[5px] w-[5px] border border-white bg-black" />
                  </span>
                )}
              </td>
              <td className={dot + 'text-center text-[17px] leading-[24px] text-black'}>
                {row.unit && (
                  <span className="inline-flex h-[28px] items-end align-middle">
                    م<sup className="static self-start font-['Liberation_Serif',serif] text-[14px] leading-[16px]">{row.unit}</sup>
                  </span>
                )}
              </td>
              <td className={dot + "text-center font-['Liberation_Serif',serif] text-[21px] leading-[26px] text-black " + (row.r === 8 ? 'bg-[#ffe699]' : '')}>{row.qty}</td>
              <td className="border-b border-l-2 border-black p-0 [border-bottom-style:dotted]" />
              <FreeCells />
            </tr>
          ))}
        </tbody>
      </table>
    </div>
  );
}

function VerticalScroll() {
  return (
    <div dir="ltr" className="flex w-[16px] shrink-0 flex-col bg-[#7c9dca]">
      <div className="flex h-[7px] items-center justify-center border border-[#5c86bd] bg-white"><span className="h-px w-[7px] bg-[#5c86bd]" /></div>
      <button aria-label="لأعلى" className="flex h-[18px] items-center justify-center"><svg width="9" height="5"><path d="M0 5h9L4.500 0z" fill="#3e5680" /></svg></button>
      <div className="flex h-[178px] w-[15px] flex-col items-center justify-center gap-[1px] rounded-[1px] border border-[#4e6a9b] bg-gradient-to-r from-[#eef2f6] via-[#dde4ec] to-[#b3c6d8]">
        {[0, 1, 2, 3].map((i) => (
          <span key={i} className="h-px w-[8px] bg-[#7d8088]" />
        ))}
      </div>
      <button aria-label="لأسفل" className="mt-auto flex h-[18px] items-center justify-center"><svg width="9" height="5"><path d="M0 0h9L4.500 5z" fill="#3e5680" /></svg></button>
    </div>
  );
}

/* ---------- sheet tabs and status ---------- */

const slant = '[clip-path:polygon(0_0,calc(100%-11px)_0,100%_100%,11px_100%)]';
const sheetTabs: [string, string, boolean][] = [
  ['حفر', 'w-[52px]', true],
  ['خ عادية (اساسات)', 'w-[134px]', true],
  ['خ  مسلحة (اساسات)', 'w-[150px]', true],
  ['الأعمدة', 'w-[70px]', true],
  ['الاسقف', 'w-[72px]', true],
  ['خ عادية دكات', 'w-[103px]', true],
  ['المباني', 'w-[69px]', true],
  ['ارضيات', 'w-[68px]', true],
  ['سيراميك حوائط حم ومط', 'w-[166px]', true],
  ['الصرف الصحي', 'w-[112px]', true],
  ['بياض تخشين', 'w-[104px]', true],
  ['ارضيات خاصة', 'w-[102px]', false],
  ['بند الابواب والشبابيك', 'w-[146px]', false],
  ['السيكوريت', 'w-[93px]', false],
  ['قواطيع (2)', 'w-[93px]', true],
  ['قواطيع', 'w-[70px]', true],
  ['الدهانات', 'w-[75px]', true],
  ['حصر', 'w-[52px]', false],
];

function SheetTabs() {
  return (
    <div className="flex h-[17px] shrink-0 border-t border-[#8aa7d3] bg-[#d6e5fa] text-[12px] leading-[15px]">
      <div dir="ltr" className="flex w-[63px] shrink-0 items-center justify-around border-b border-l border-[#6a8fbf] bg-[#dde9f8]">
        {['M1 0v8M7 0L3 4l4 4z', 'M6 0L2 4l4 4z', 'M2 0l4 4-4 4z', 'M7 0v8M1 0l4 4-4 4z'].map((d) => (
          <button key={d} aria-label="تنقل بين الأوراق"><svg width="8" height="8"><path d={d} fill="#15428b" stroke="#15428b" /></svg></button>
        ))}
      </div>
      <button className="z-10 -ml-[11px] w-[60px] shrink-0 border-b border-[#6a8fbf] bg-gradient-to-b from-white to-[#e6f0fc] pl-2 text-[11px] font-bold text-[#15428b] [clip-path:polygon(0_0,100%_0,100%_100%,11px_100%)]">ملخص</button>
      {sheetTabs.map(([t, w, green]) => (
        <button key={t} className={'-ml-[11px] h-[15px] shrink-0 bg-white pb-px pl-[2px] ' + slant + ' ' + w}>
          <span
            className={
              'block h-[14px] whitespace-pre leading-[14px] ' +
              slant +
              (green ? ' bg-gradient-to-b from-[#86d9a6] from-45% via-[#16b255] via-50% to-[#c8efd6] text-black' : ' bg-gradient-to-b from-[#cfe0f8] to-[#e6f0fc] text-[#15428b]')
            }
          >
            {t}
          </span>
        </button>
      ))}
      <div className="mr-auto flex w-[30px] shrink-0 border-b border-[#6a8fbf] bg-[#7c9dca]">
        <span className="flex h-full w-[14px] justify-center gap-[3px] border border-[#7fa0cf] bg-white py-[2px]"><i className="w-px bg-[#7fa0cf]" /><i className="w-px bg-[#7fa0cf]" /></span>
      </div>
    </div>
  );
}

function RoundBtn({ plus }: { plus?: boolean }) {
  return (
    <button aria-label={plus ? 'تكبير' : 'تصغير العرض'} className="shrink-0">
      <svg width="16" height="16" viewBox="0 0 16 16"><circle cx="8" cy="8" r="7" fill="#f1f5fb" stroke="#6f87ab" strokeWidth="1.500" /><path d={plus ? 'M4 8h8M8 4v8' : 'M4 8h8'} stroke="#465f88" strokeWidth="2" /></svg>
    </button>
  );
}

function StatusBar() {
  return (
    <footer className="flex h-[21px] shrink-0 bg-gradient-to-b from-[#d9e7fa] via-[#b4d0f5] via-50% to-[#d8e7fb] text-[11px] text-[#15428b]">
      <span className="flex w-[40px] items-center border-l border-[#9cb9e0] pr-2 text-[12px] leading-[16px]">جاهز</span>
      <div dir="ltr" className="mr-auto flex w-[247px] items-center border-r-2 border-[#6a8fbf] bg-gradient-to-b from-[#a9c6ee] to-[#7e9fd2] pl-1">
        <RoundBtn plus />
        <div className="relative flex h-full w-[102px] items-center">
          <input aria-label="مستوى التكبير" type="range" className="absolute inset-0 w-full opacity-0" />
          <span className="h-px w-full bg-[#e3ecf8]" />
          <svg className="absolute left-[46px]" width="11" height="13" viewBox="0 0 11 13"><path d="M1.500.5h8v8l-4 4-4-4z" fill="#e4ecf7" stroke="#465f88" /><path d="M5.500 3v5" stroke="#465f88" /></svg>
        </div>
        <RoundBtn />
        <span className="w-[46px] text-center text-[#15157a]">100%</span>
        <div className="flex h-[18px] w-[56px] rounded-[2px] border border-[#7c97c0] bg-[#c7daf3]">
          <button aria-label="معاينة فواصل الصفحات" className="flex flex-1 items-center justify-center"><svg width="13" height="12"><path d="M0 0h13v12H0z" fill="#777" /><path d="M2 2h4v6H2zM8 2h3v6H8z" fill="#fff" /></svg></button>
          <button aria-label="تخطيط الصفحة" className="flex flex-1 items-center justify-center"><svg width="12" height="12"><path d="M0 0h12v12H0z" fill="#777" /><path d="M3 2h6v8H3z" fill="#fff" /><path d="M4 4.500h4M4 6.500h4M4 8.500h4" stroke="#777" /></svg></button>
          <button aria-label="عادي" className="flex flex-1 items-center justify-center bg-[#fdd78a]"><svg width="13" height="12"><path d="M.5.5h12v11H.5zM.5 4h12M.5 8h12M4.500.5v11M8.500.5v11" fill="#fff" stroke="#666" /></svg></button>
        </div>
      </div>
    </footer>
  );
}

/* ---------- desktop taskbar ---------- */

function Landscape() {
  return (
    <svg className="absolute right-0 top-0" width="78" height="38" viewBox="0 0 78 38">
      <path d="M24 8C34 0 50 0 60 6l18 6v10H20z" fill="#5e6fa8" />
      <path d="M2 14L14 3l12 8 8 27H0z" fill="#6ba03a" />
      <path d="M14 3l12 8-6 8z" fill="#a9c653" />
      <path d="M26 12C40 4 62 2 78 8v30H20z" fill="#3f7f35" />
      <path d="M40 8c12-5 30-3 38 2v8L50 14z" fill="#93b84a" />
      <path d="M0 26c6-8 14-10 22-2l8 14H2z" fill="#1d7a6c" />
      <path d="M8 20c10-8 18-4 24 6l4 12H16z" fill="#2f8f6a" />
      <path d="M78 19C58 13 46 12 46 18c0 8-14 6-14 11 0 4 12 4 16-3" fill="none" stroke="#dfe3ee" strokeWidth="3" />
      <path d="M48 38l4-12 6 12zM58 24l14 14h6V26z" fill="#a8cf3c" />
      <path d="M54 22l12 16h-8z" fill="#1d5f37" />
    </svg>
  );
}

function Taskbar() {
  return (
    <div dir="ltr" className="flex h-[40px] shrink-0 items-stretch bg-[#1b1b1b] text-white">
      <button aria-label="Start" className="flex w-[48px] items-center justify-center">
        <svg width="16" height="16" viewBox="0 0 16 16"><path d="M0 2.300L6.500 1.400v6.200H0zM7.300 1.300L16 0v7.600H7.300zM0 8.400h6.500v6.200L0 13.700zM7.300 8.400H16V16l-8.700-1.300z" fill="#fff" /></svg>
      </button>
      <label className="relative my-px flex w-[288px] items-center overflow-hidden bg-[#f2f2f2] pl-[12px]">
        <svg width="17" height="17" viewBox="0 0 17 17"><circle cx="10.500" cy="6.500" r="5.500" fill="none" stroke="#111" strokeWidth="1.300" /><path d="M6.500 10.500L.5 16.500" stroke="#111" strokeWidth="1.300" /></svg>
        <input aria-label="Type here to search" placeholder="Type here to search" className="ml-[11px] w-[160px] text-[14px] text-[#333] outline-none placeholder:text-[#3b3b3b]" />
        <Landscape />
      </label>
      <button aria-label="Task View" className="flex w-[48px] items-center justify-center">
        <svg width="17" height="17" viewBox="0 0 17 17"><path d="M1 0v2.500h10V0M1.500 5.500h9v6h-9zM1 17v-2.500h10V17M14.500 0v4M14.500 9v8" fill="none" stroke="#fff" /><path d="M13 5h3v3h-3z" fill="#fff" /></svg>
      </button>
      <div className="ml-[3px] flex gap-2 pl-1">
        <button aria-label="Google Chrome" className="flex w-[40px] items-center justify-center border-b-2 border-[#76b9ed]">
          <svg width="24" height="24" viewBox="0 0 24 24"><circle cx="12" cy="12" r="12" fill="#fbc116" /><path d="M12 12L1.600 6A12 12 0 0 1 22.400 6z" fill="#e33b2e" /><path d="M12 12L1.600 6A12 12 0 0 0 12 24l5-9z" fill="#2da94f" /><path d="M12 6h10.400a12 12 0 0 1-10.400 18l5.200-9z" fill="#fbc116" /><circle cx="12" cy="12" r="5.600" fill="#fff" /><circle cx="12" cy="12" r="4.500" fill="#3a7cf0" /></svg>
        </button>
        <button aria-label="File Explorer" className="flex w-[40px] items-center justify-center border-b-2 border-[#76b9ed]">
          <svg width="22" height="18" viewBox="0 0 22 18"><path d="M0 1h8l2 2h11v14H0z" fill="#e9a73a" /><path d="M0 5h22v12H0z" fill="#fbd568" /><path d="M4 18v-7h14v7h-4v-3H8v3z" fill="#3f94dd" /></svg>
        </button>
        <button aria-label="Microsoft Excel" className="-ml-[3px] flex w-[48px] items-center justify-center border-b-2 border-[#76b9ed] bg-[#4b4b4b]">
          <svg width="24" height="24" viewBox="0 0 24 24"><path d="M4 3l14-2.500 1 4 4 1-1 17.500-16-1-4-3z" fill="#e6f1df" stroke="#a9bd9f" strokeWidth=".8" /><path d="M10 10h12v12l-12-1z" fill="#fff" /><path d="M10 13.500h12M10 17.500h12M13 8v13M17.500 8v14" stroke="#5c9a46" strokeWidth="1.600" /><path d="M2 5l12-2v12L2 16z" fill="#c5e2b3" stroke="#8db27a" strokeWidth=".6" /><path d="M4.500 6l6.500 8.500M11.500 5L5 15" stroke="#1f6f1d" strokeWidth="2.400" /></svg>
        </button>
      </div>
      <div className="ml-auto flex items-center text-[12px]">
        <span>Desktop</span>
        <span className="ml-[6px] self-start text-[16px] leading-[16px]">»</span>
        <svg className="ml-[10px]" width="12" height="7"><path d="M.5 6.500l5.500-5.500 5.500 5.500" fill="none" stroke="#fff" strokeWidth="1.300" /></svg>
        <svg className="ml-[13px]" width="12" height="16" viewBox="0 0 12 16"><path d="M2 1.500C4 0 8 0 10 1.500M2 14.500c2 1.500 6 1.500 8 0M.5 5.500h7v6h-7zM7.500 8l4-3v7l-4-3" fill="none" stroke="#fff" /></svg>
        <svg className="ml-[9px]" width="18" height="15" viewBox="0 0 18 15"><path d="M5 1.500h12.500v9H3.500V7M.5.5h4v4h-4zM2.500 4v9M10 10.500v3M6 13.500h8" fill="none" stroke="#fff" /></svg>
        <svg className="ml-[6px]" width="17" height="14" viewBox="0 0 17 14"><path d="M.5 4.500h2l3-3v11l-3-3h-2z" fill="none" stroke="#fff" /><path d="M8 5c1 1 1 3 0 4M10.500 3c2 2 2 6 0 8M13 1c3.500 3 3.500 9 0 12" fill="none" stroke="#fff" /></svg>
        <span className="ml-[17px]">ع</span>
        <div className="ml-[20px] w-[56px] text-center leading-[18px]">12:28 PM<br />9/1/2025</div>
        <button aria-label="Notifications" className="relative ml-[14px] h-[24px] w-[26px]">
          <svg width="17" height="17" viewBox="0 0 17 17"><path d="M0 0h17v12H7l-3 4v-4H0z" fill="#fff" /><path d="M3 3.500h11M3 6.500h11M3 9.500h7" stroke="#1b1b1b" /></svg>
          <span className="absolute bottom-0 right-[2px] h-[16px] w-[16px] rounded-full border border-[#999] bg-[#333] text-[11px] font-bold leading-[14px]">2</span>
        </button>
        <span className="ml-[10px] mr-[4px] h-full w-px bg-[#666]" />
      </div>
    </div>
  );
}

export default function App() {
  return (
    <div dir="rtl" className={'relative flex h-screen flex-col overflow-hidden bg-[#bfdbff] ' + UI}>
      <OfficeOrb />
      <TitleBar />
      <TabRow />
      <Ribbon />
      <FormulaBar />
      <main dir="ltr" className="mt-[4px] flex min-h-0 flex-1">
        <VerticalScroll />
        <Sheet />
      </main>
      <SheetTabs />
      <StatusBar />
      <Taskbar />
      <div dir="ltr" className="pointer-events-none absolute bottom-[88px] right-[76px] z-20 w-[233px] whitespace-nowrap text-[#a9a9a9]/80">
        <p className="text-[20px] leading-[24px]">Activate Windows</p>
        <p className="text-[14px] leading-[20px]">Go to Settings to activate Windows.</p>
      </div>
      <div dir="ltr" className="pointer-events-none absolute bottom-[20px] left-[738px] z-20 flex w-[204px] flex-col items-center font-bold text-[#b4b4b4]/50">
        <span className="font-['DejaVu_Sans',sans-serif] text-[64px] leading-[68px]">مستقل</span>
        <span className="font-['Liberation_Sans',sans-serif] text-[33px] leading-[36px]">mostaql.com</span>
      </div>
    </div>
  );
}
